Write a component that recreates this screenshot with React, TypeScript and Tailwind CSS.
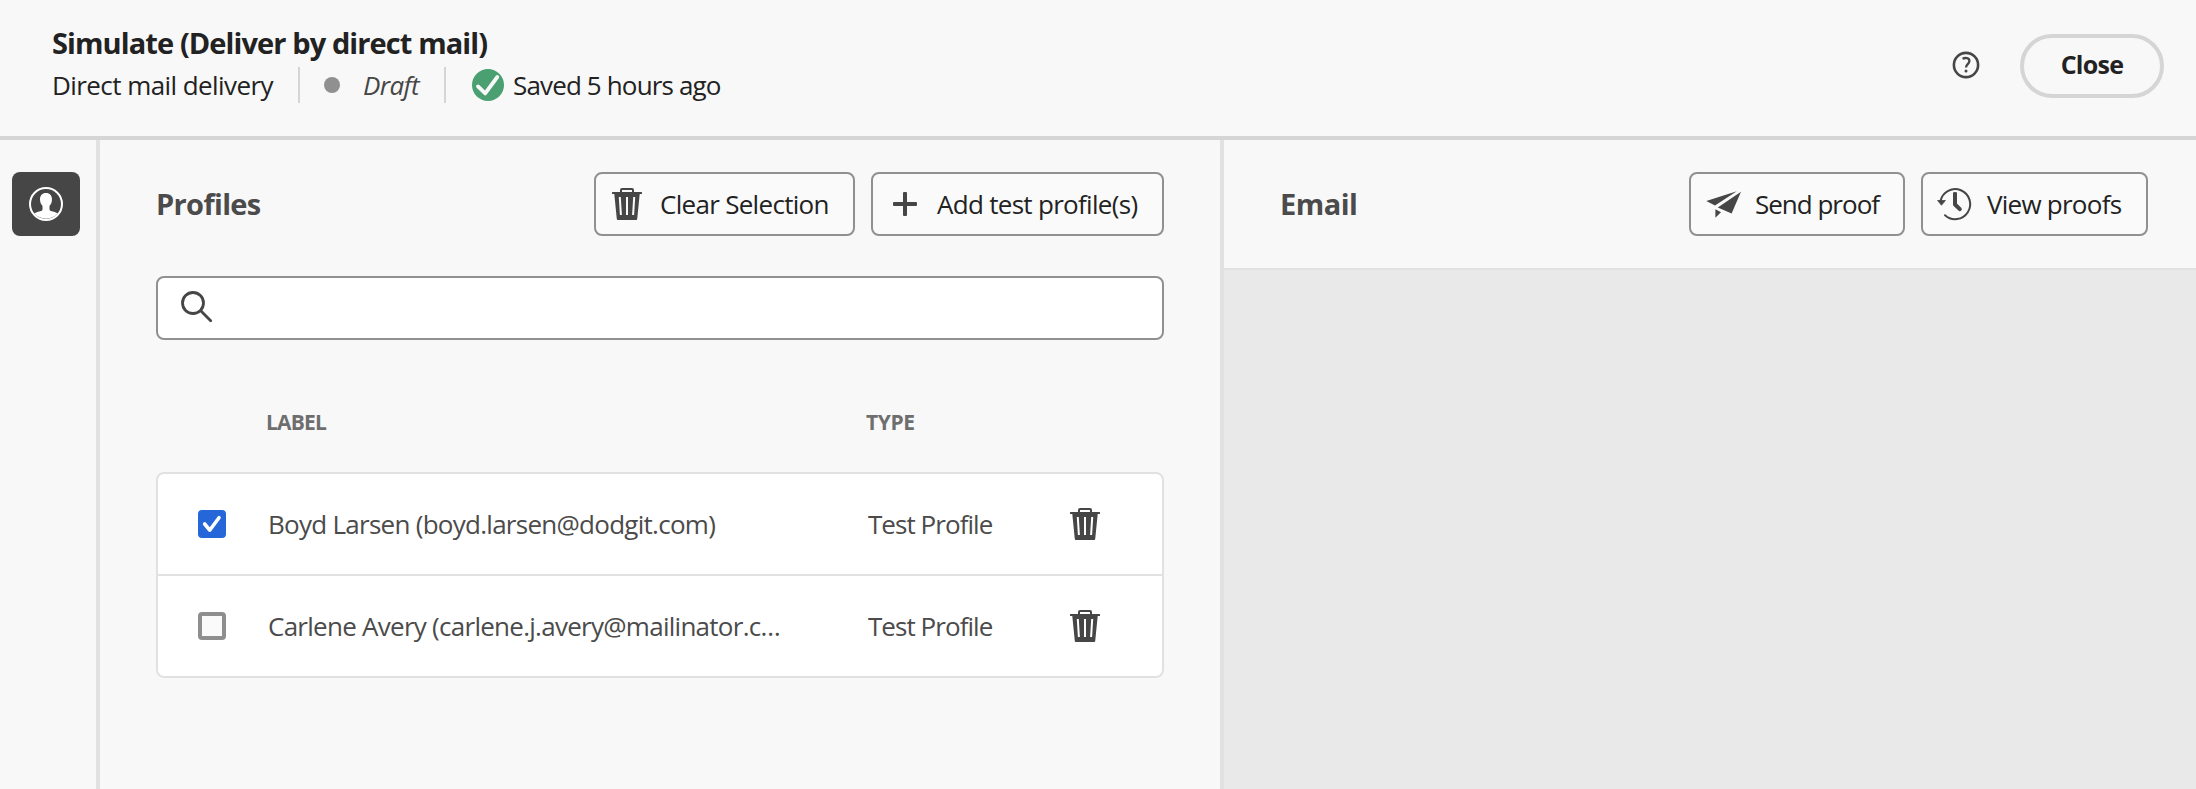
import type { ReactNode } from 'react';

function TrashIcon() {
  return (
    <svg viewBox="0 0 30 32" className="h-8 w-[30px] shrink-0" fill="#464646" fillRule="evenodd">
      <path d="M0 4.6q0-.6.6-.6H8V2q0-2 2-2h10q2 0 2 2v2h7.400q.6 0 .6.600V6h-2.300L25.200 31q-.1 1-1 1H5.800q-.9 0-1-1L2.300 6H0zM10 4h10V2H10zM6.800 9l1.100 18h2L8.800 9zM14 9v18h2V9zM21.200 9l-1.100 18h2l1.100-18z" />
    </svg>
  );
}

function PlusIcon() {
  return (
    <svg viewBox="0 0 24 24" className="size-6 shrink-0" fill="#464646">
      <rect x="10" y="0" width="4" height="24" rx="1" />
      <rect x="0" y="10" width="24" height="4" rx="1" />
    </svg>
  );
}

function SendIcon() {
  return (
    <svg viewBox="0 0 36 36" className="size-9 shrink-0" fill="#464646">
      <path d="M1.300 15 31.800 5.200 10 19.400z" />
      <path d="M36 5.800 26.600 27.400 12.800 21.500z" />
      <path d="M10.400 23.300l5.600 2.900-5.600 5.500z" />
    </svg>
  );
}

function HistoryIcon() {
  return (
    <svg viewBox="0 0 36 36" className="size-9 shrink-0" fill="none" stroke="#464646">
      <path d="M3.500 15A15 15 0 1 1 8 29.200" strokeWidth="2" strokeLinecap="round" />
      <path d="M.6 14.500h7.800L4.500 19.200z" fill="#464646" strokeWidth="0.800" strokeLinejoin="round" />
      <path d="M18 8v10.500l4.800 4.600" strokeWidth="4" strokeLinecap="round" strokeLinejoin="round" />
      <path d="M16 6.500h4v3h-4z" fill="#464646" stroke="none" />
    </svg>
  );
}

function ProfileIcon() {
  return (
    <svg viewBox="0 0 36 36" className="size-9" fill="#fff">
      <circle cx="18" cy="18" r="16" fill="none" stroke="#fff" strokeWidth="2" />
      <path d="M18 7c-3.800 0-6 2.600-6 6.500 0 3 1.300 5.200 2.500 6.500v3.200c0 .8-.5 1.400-1.400 1.700-2.800.6-5 1.200-6.900 2.600A16 16 0 0 0 29.800 27.500c-1.900-1.400-4.100-2-6.900-2.600-.9-.3-1.400-.9-1.400-1.700V20c1.200-1.300 2.500-3.500 2.500-6.500C24 9.600 21.800 7 18 7z" />
    </svg>
  );
}

function SearchIcon() {
  return (
    <svg viewBox="0 0 32 32" className="size-8" fill="none" stroke="#464646" strokeLinecap="round">
      <circle cx="12" cy="12" r="10.500" strokeWidth="2.800" />
      <path d="M20 20l9.700 9.700" strokeWidth="2.800" />
    </svg>
  );
}

function HelpIcon() {
  return (
    <svg viewBox="0 0 28 28" className="size-7" fill="none" stroke="#464646">
      <circle cx="14" cy="14" r="12.100" strokeWidth="2.600" />
      <path d="M10.500 7.700c2.600-1.200 6.900-.9 6.900 2.300 0 3-3.400 3.200-3.400 6.400" strokeWidth="2.300" />
      <circle cx="14" cy="20" r="1.500" fill="#464646" stroke="none" />
    </svg>
  );
}

function SavedIcon() {
  return (
    <svg viewBox="0 0 32 32" className="size-8" fill="none">
      <circle cx="16" cy="16" r="16" fill="#4aa071" />
      <path d="M6 17.400l7.200 7L25.300 8" stroke="#f8f8f8" strokeWidth="3.800" strokeLinecap="round" strokeLinejoin="round" />
    </svg>
  );
}

function Checkbox({ checked }: { checked: boolean }) {
  if (!checked) {
    return <span className="size-7 rounded-[4px] border-4 border-[#8e8e8e] bg-[#fafafa]" />;
  }
  return (
    <span className="size-7 rounded-[4px] bg-[#2566d9]">
      <svg viewBox="0 0 28 28" className="size-7" fill="none">
        <path d="M6.700 14l5 6.200L21 7.700" stroke="#fff" strokeWidth="3.600" strokeLinecap="round" strokeLinejoin="round" />
      </svg>
    </span>
  );
}

function ActionButton({ className, children }: { className: string; children: ReactNode }) {
  return (
    <button className={`flex h-16 items-center whitespace-nowrap rounded-lg border-2 border-[#909090] bg-[#fafafa] text-[26px] text-[#222] ${className}`}>
      {children}
    </button>
  );
}

const profiles = [
  { label: 'Boyd Larsen (boyd.larsen@dodgit.com)', type: 'Test Profile', checked: true },
  { label: 'Carlene Avery (carlene.j.avery@mailinator.c…', type: 'Test Profile', checked: false },
];

export default function App() {
  return (
    <div className="flex h-[789px] w-[2196px] flex-col overflow-hidden bg-[#f8f8f8] font-['Open_Sans',sans-serif] text-[#222]">
      <header className="flex h-[140px] shrink-0 justify-between border-b-4 border-[#d5d5d5] pl-[52px] pr-8">
        <div className="pt-[25px]">
          <h1 className="whitespace-nowrap text-[29px] font-bold leading-9 tracking-[-0.9px]">Simulate (Deliver by direct mail)</h1>
          <div className="mt-1.5 flex h-9 items-center whitespace-nowrap text-[26px] leading-9">
            <span className="w-[246px] tracking-[-0.57px]">Direct mail delivery</span>
            <span className="h-9 w-0.5 bg-[#d5d5d5]" />
            <span className="ml-6 size-4 rounded-full bg-[#909090]" />
            <span className="ml-[23px] w-[81px] italic tracking-[-0.6px] text-[#464646]">Draft</span>
            <span className="h-9 w-0.5 bg-[#d5d5d5]" />
            <span className="ml-[26px]"><SavedIcon /></span>
            <span className="ml-[9px] tracking-[-0.85px]">Saved 5 hours ago</span>
          </div>
        </div>
        <div className="flex items-center pb-1">
          <span className="mr-10 pb-0.5"><HelpIcon /></span>
          <button className="h-16 w-36 rounded-full border-4 border-[#d5d5d5] pb-0.5 text-[25px] font-bold tracking-[-0.7px]">Close</button>
        </div>
      </header>

      <div className="flex min-h-0 flex-1">
        <nav className="w-[100px] shrink-0 border-r-4 border-[#e1e1e1] pl-3 pt-8">
          <button className="flex h-16 w-[68px] items-center justify-center rounded-lg bg-[#464646]"><ProfileIcon /></button>
        </nav>

        <section className="w-[1124px] shrink-0 border-r-4 border-[#e1e1e1] px-14 pt-8">
          <div className="flex h-16 items-center">
            <h2 className="mr-auto text-[29px] font-bold tracking-[-0.65px] text-[#4b4b4b]">Profiles</h2>
            <ActionButton className="mr-4 w-[261px] gap-[18px] pl-4 tracking-[-0.7px]"><TrashIcon />Clear Selection</ActionButton>
            <ActionButton className="w-[293px] gap-5 pl-5 tracking-[-0.7px]"><PlusIcon />Add test profile(s)</ActionButton>
          </div>

          <div className="mt-10 flex h-16 rounded-lg border-2 border-[#909090] bg-white pl-[23px] pt-[13px]"><SearchIcon /></div>

          <div className="mt-[68px] flex h-7 items-center pl-[110px] text-[21px] font-bold leading-7 text-[#6e6e6e]">
            <span className="w-[600px] tracking-[-0.8px]">LABEL</span>
            <span className="tracking-[-0.4px]">TYPE</span>
          </div>

          <div className="mt-9 divide-y-2 divide-[#e1e1e1] rounded-lg border-2 border-[#e1e1e1] bg-white text-[26px] text-[#4b4b4b]">
            {profiles.map((p) => (
              <div key={p.label} className="flex h-[102px] items-center whitespace-nowrap pl-10 last:h-[100px]">
                <Checkbox checked={p.checked} />
                <span className="ml-[42px] w-[600px] tracking-[-0.73px]">{p.label}</span>
                <span className="w-[202px] tracking-[-0.95px]">{p.type}</span>
                <TrashIcon />
              </div>
            ))}
          </div>
        </section>

        <section className="flex min-w-0 flex-1 flex-col">
          <div className="flex h-[130px] shrink-0 items-center border-b-2 border-[#e1e1e1] pl-14 pr-12">
            <h2 className="mr-auto text-[29px] font-bold tracking-[-0.5px] text-[#4b4b4b]">Email</h2>
            <ActionButton className="mr-4 w-[216px] gap-[14px] pl-[14px] tracking-[-1px]"><SendIcon />Send proof</ActionButton>
            <ActionButton className="w-[227px] gap-[14px] pl-[14px] tracking-[-0.75px]"><HistoryIcon />View proofs</ActionButton>
          </div>
          <div className="flex-1 bg-[#e9e9e9]" />
        </section>
      </div>
    </div>
  );
}
